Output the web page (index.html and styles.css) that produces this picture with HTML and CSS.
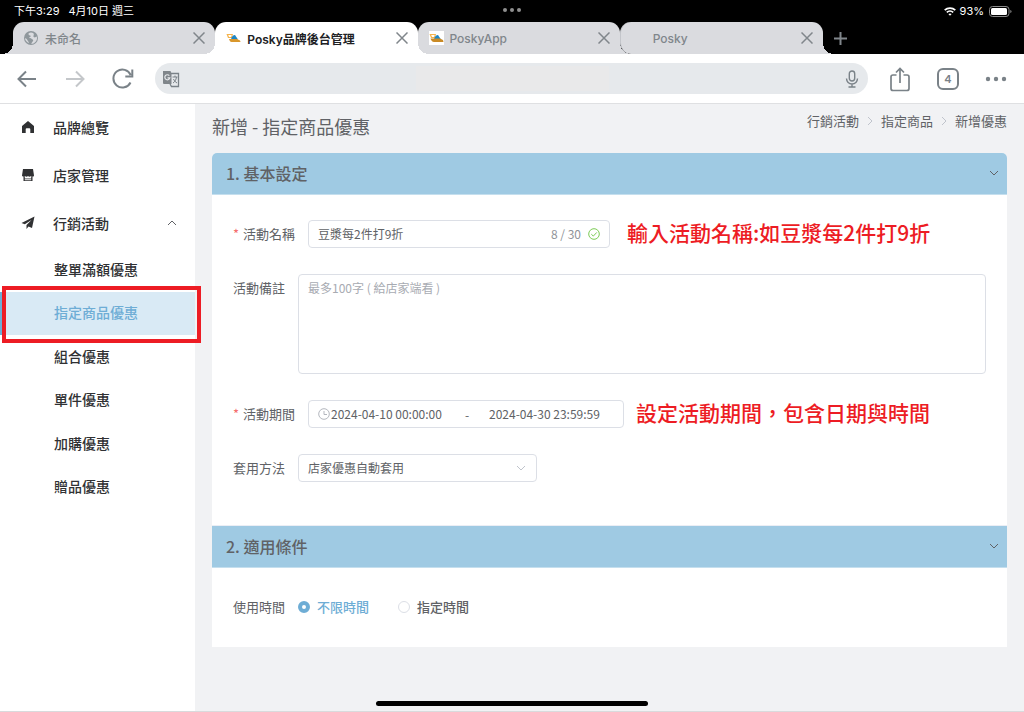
FILE: index.html
```
<!DOCTYPE html>
<html lang="zh-Hant">
<head>
    <meta charset="UTF-8">
    <meta name="viewport" content="width=device-width, initial-scale=1.0">
    <title>Posky品牌後台管理</title>
    <link rel="stylesheet" href="styles.css">
</head>
<body>
    <!-- 狀態列 -->
    <div class="status-bar">
        <span class="status-time">下午3:29</span>
        <span class="status-date">4月10日 週三</span>
        <svg class="status-dots" width="20" height="4" viewBox="0 0 20 4" fill="#8f8f8f"><circle cx="3" cy="2" r="2"/><circle cx="10" cy="2" r="2"/><circle cx="17" cy="2" r="2"/></svg>
        <svg class="wifi" width="12" height="9" viewBox="0 0 12 9" fill="none" stroke="#fff" stroke-width="1.7"><path d="M.7 3.2a7.6 7.6 0 0 1 10.6 0M2.8 5.3a4.6 4.6 0 0 1 6.4 0"/><path d="M6 8.8 4.4 7.1a2.4 2.4 0 0 1 3.2 0z" fill="#fff" stroke="none"/></svg>
        <span class="battery-text">93%</span>
        <svg width="23" height="11" viewBox="0 0 23 11"><rect x=".5" y=".5" width="19.500" height="10" rx="3" fill="none" stroke="#8a8a8a"/><rect x="2" y="2" width="16" height="7" rx="1.500" fill="#fff"/><path d="M21.300 4v3q1.200-.4 1.200-1.500T21.300 4z" fill="#8a8a8a"/></svg>
    </div>

    <!-- 分頁 -->
    <div class="tabs">
        <div class="tab">
            <svg class="tab-icon" width="16" height="16" viewBox="0 0 16 16"><circle cx="8" cy="8" r="7" fill="#8f979c"/><path d="M8 2.500c-2 0-3 1-2.300 2.200.6.900 2 .4 2.200 1.400.1.900-1.500.8-1.700 1.700 0 .6 1.600.3 2.300.9 1 .9 2.300 1.200 1.500 2.300-.7 1-1.500 1.700-1.600 3 3.200-.3 5.600-2.800 5.600-6 0-.6-.1-1-.3-1.500-.8.5-1.500 1.300-2.500.8-.9-.5-.9-1.300-.5-2.100.3-.6.200-1.200-.3-1.900-.7-.500-1.500-.8-2.400-.8zM2 8c1 .5 2 1 2.500 2.200.4 1 1.200 1.200 1.500 2.700-2.300-.7-4-2.600-4-4.900z" fill="#dadbdf"/></svg>
            <span class="tab-title">未命名</span>
            <button class="tab-close" aria-label="關閉分頁"><svg width="12" height="12" viewBox="0 0 12 12"><path d="M.5.5l11 11M11.500.5l-11 11"/></svg></button>
        </div>
        <div class="tab active">
            <svg class="tab-icon" width="16" height="16" viewBox="0 0 16 16"><path d="M1.500 4H8L7 8H3z" fill="#f6b34b"/><path d="M3.200 5h3.500l-.6 2H4z" fill="#fff"/><path d="M6 9.500C6.500 6.500 8 5 10 5l3 4.500z" fill="#1f86c4"/><path d="M4 9h8l3 1.500.5 1.500H6.500C5 12 4.500 10.500 4 9z" fill="#d9972c"/></svg>
            <span class="tab-title">Posky品牌後台管理</span>
            <button class="tab-close" aria-label="關閉分頁"><svg width="12" height="12" viewBox="0 0 12 12"><path d="M.5.5l11 11M11.500.5l-11 11"/></svg></button>
        </div>
        <div class="tab">
            <svg class="tab-icon" width="16" height="16" viewBox="0 0 16 16"><path d="M1 1h15v14H1z" fill="#fff"/><path d="M1.500 4H8L7 8H3z" fill="#f6b34b"/><path d="M3.200 5h3.500l-.6 2H4z" fill="#fff"/><path d="M6 9.500C6.500 6.500 8 5 10 5l3 4.500z" fill="#1f86c4"/><path d="M2.500 8.500H12l3 1.500.5 2H6C4 12 3 10 2.500 8.500z" fill="#c98a25"/></svg>
            <span class="tab-title">PoskyApp</span>
            <button class="tab-close" aria-label="關閉分頁"><svg width="12" height="12" viewBox="0 0 12 12"><path d="M.5.5l11 11M11.500.5l-11 11"/></svg></button>
        </div>
        <div class="tab divided">
            <span class="tab-icon"></span>
            <span class="tab-title">Posky</span>
            <button class="tab-close" aria-label="關閉分頁"><svg width="12" height="12" viewBox="0 0 12 12"><path d="M.5.5l11 11M11.500.5l-11 11"/></svg></button>
        </div>
        <button class="tab-add" aria-label="新增分頁"><svg width="13" height="13" viewBox="0 0 13 13"><path d="M6.500 0v13M0 6.500h13"/></svg></button>
    </div>

    <!-- 工具列 -->
    <div class="toolbar">
        <button aria-label="上一頁"><svg width="22" height="22" viewBox="0 0 22 22"><path d="M20 11H2.500M10 3.500 2.500 11l7.500 7.500"/></svg></button>
        <button class="disabled" aria-label="下一頁"><svg width="22" height="22" viewBox="0 0 22 22"><path d="M2 11h17.500M12 3.500l7.500 7.500-7.500 7.500"/></svg></button>
        <button aria-label="重新整理"><svg width="22" height="22" viewBox="0 0 22 22"><path d="M18.500 14.500A9 9 0 1 1 18.700 7M20.300 1.500v7h-7"/></svg></button>
        <div class="omnibox">
            <button aria-label="翻譯"><svg width="18" height="18" viewBox="0 0 18 18" fill="none"><path d="M1 1h7.500l1 2.500V14H2a1 1 0 0 1-1-1z" fill="#80868b" stroke="none"/><path d="M9 3.500h7.500v13H9.500L8 14" stroke-width="1.300"/><path d="M7.300 5.700A2.500 2.500 0 1 0 7.800 7.800H5.500" stroke="#e6e9ec" stroke-width="1.200"/><path d="M10.500 7h5M13 5.500V7M11 13c2-1.300 3-3 3.500-6M11.500 9c.5 1.500 2 3 3.500 4" stroke-width="1"/></svg></button>
            <input type="text" class="address" aria-label="網址">
            <button aria-label="語音搜尋"><svg width="14" height="18" viewBox="0 0 14 18"><rect x="4.300" y="1" width="5.400" height="10" rx="2.700" stroke-width="1.400"/><path d="M1.500 8.500a5.500 5.500 0 0 0 11 0M7 14v3M3.500 17h7" stroke-width="1.400"/></svg></button>
        </div>
        <button aria-label="分享"><svg width="22" height="26" viewBox="0 0 22 26"><path d="M7.500 9H4a2 2 0 0 0-2 2v11.500a2 2 0 0 0 2 2h14a2 2 0 0 0 2-2V11a2 2 0 0 0-2-2h-3.500M11 17V3M7 6.500l4-4 4 4" stroke-width="1.700"/></svg></button>
        <button class="tab-count">4</button>
        <button aria-label="更多"><svg width="22" height="6" viewBox="0 0 22 6"><g fill="#7a8288" stroke="none"><circle cx="3" cy="3" r="2.200"/><circle cx="11" cy="3" r="2.200"/><circle cx="19" cy="3" r="2.200"/></g></svg></button>
    </div>

    <div class="page">
        <!-- 左側選單 -->
        <nav class="sidebar">
            <a href="#" class="menu-item">
                <svg width="14" height="14" viewBox="0 0 14 14"><path d="M7 1 1 6v7h3.700V9.200a1 1 0 0 1 1-1h2.600a1 1 0 0 1 1 1V13H13V6z"/></svg>
                品牌總覽
            </a>
            <a href="#" class="menu-item">
                <svg width="14" height="14" viewBox="0 0 14 14"><path d="M2 1h10l1 6.500c0 1.500-2.400 1.500-3 .5-.6 1-2.400 1-3 0-.6 1-2.400 1-3 0-.6 1-3 1-3-.5zM2.500 8.500h1.300v2h6.400v-2h1.300V13h-9zM3.800 11.300v.9h6.400v-.9z" fill-rule="evenodd"/></svg>
                店家管理
            </a>
            <a href="#" class="menu-item">
                <svg width="14" height="14" viewBox="0 0 14 14"><path d="M13.500.5.5 7l3.300 1.300L10.500 4 5.500 9v4l2-2.500 3.500 1.500z"/></svg>
                行銷活動
                <svg class="arrow" width="10" height="10" viewBox="0 0 10 10"><path d="M1 7l4-4 4 4"/></svg>
            </a>
            <div class="submenu">
                <a href="#">整單滿額優惠</a>
                <a href="#" class="current">指定商品優惠</a>
                <a href="#">組合優惠</a>
                <a href="#">單件優惠</a>
                <a href="#">加購優惠</a>
                <a href="#">贈品優惠</a>
            </div>
        </nav>

        <main>
            <div class="page-header">
                <h1>新增 - 指定商品優惠</h1>
                <div class="breadcrumb">
                    <a href="#">行銷活動</a>
                    <svg width="8" height="10" viewBox="0 0 8 10"><path d="M2 1l4 4-4 4"/></svg>
                    <a href="#">指定商品</a>
                    <svg width="8" height="10" viewBox="0 0 8 10"><path d="M2 1l4 4-4 4"/></svg>
                    <span>新增優惠</span>
                </div>
            </div>

            <form class="card">
                <button type="button" class="section-title">
                    1. 基本設定
                    <svg width="10" height="10" viewBox="0 0 10 10"><path d="M1 3l4 4 4-4"/></svg>
                </button>
                <div class="section-body basic">
                    <div class="row">
                        <label class="required" for="name">活動名稱</label>
                        <div class="field name-field">
                            <input type="text" id="name" value="豆漿每2件打9折">
                            <span class="count">8 / 30</span>
                            <svg width="12" height="12" viewBox="0 0 12 12" fill="none" stroke="#7ccb56"><circle cx="6" cy="6" r="5.300"/><path d="M3.300 6.200l2 1.900 3.500-3.700"/></svg>
                        </div>
                        <p class="note">輸入活動名稱:如豆漿每2件打9折</p>
                    </div>
                    <div class="row top">
                        <label for="remark">活動備註</label>
                        <textarea id="remark" placeholder="最多100字 ( 給店家端看 )"></textarea>
                    </div>
                    <div class="row">
                        <label class="required" for="start">活動期間</label>
                        <div class="field date-field">
                            <svg width="12" height="12" viewBox="0 0 12 12" fill="none" stroke="#b4b7be"><circle cx="6" cy="6" r="5.300"/><path d="M6 3v3.500h3"/></svg>
                            <input type="text" id="start" value="2024-04-10 00:00:00">
                            <span class="dash">-</span>
                            <input type="text" aria-label="結束時間" value="2024-04-30 23:59:59">
                        </div>
                        <p class="note">設定活動期間，包含日期與時間</p>
                    </div>
                    <div class="row">
                        <label for="method">套用方法</label>
                        <div class="select-wrap">
                            <select id="method">
                                <option>店家優惠自動套用</option>
                            </select>
                            <svg width="10" height="10" viewBox="0 0 10 10"><path d="M1 3l4 4 4-4"/></svg>
                        </div>
                    </div>
                </div>

                <button type="button" class="section-title">
                    2. 適用條件
                    <svg width="10" height="10" viewBox="0 0 10 10"><path d="M1 3l4 4 4-4"/></svg>
                </button>
                <div class="section-body">
                    <div class="row" role="radiogroup" aria-labelledby="time-label">
                        <span class="label" id="time-label">使用時間</span>
                        <label class="radio"><input type="radio" name="time" checked><span>不限時間</span></label>
                        <label class="radio"><input type="radio" name="time"><span>指定時間</span></label>
                    </div>
                </div>
            </form>
        </main>
    </div>
    <div class="home-bar"></div>
</body>
</html>
```
FILE: styles.css
```
*{
    box-sizing: border-box;
}
body{
    margin: 0;
    min-height: 100vh;
    display: flex;
    flex-direction: column;
    position: relative;
    background-color: #f1f2f4;
    border-bottom: 1px solid #d9dadc;
    font-family: "Noto Sans CJK TC", sans-serif;
    font-size: 13px;
    color: #606266;
}
button,input,textarea,select{
    font-family: inherit;
    color: inherit;
    margin: 0;
    padding: 0;
    border: none;
    outline: none;
    background: none;
}
a{
    color: inherit;
    text-decoration: none;
}
svg{
    flex: none;
    display: block;
}

/* 狀態列 */
.status-bar,.tabs,.toolbar{
    font-family: Inter, "Noto Sans CJK TC", sans-serif;
}
.status-bar{
    height: 22px;
    padding: 0 12px 0 14px;
    display: flex;
    align-items: center;
    position: relative;
    background-color: #000;
    color: #fff;
    font-size: 11px;
    line-height: 20px;
}
.status-date{
    margin-left: 9px;
}
.status-dots{
    position: absolute;
    left: calc(50% - 10px);
    top: 8px;
}
.wifi{
    margin-left: auto;
}
.battery-text{
    margin: 0 5px 0 4px;
}

/* 分頁 */
.tabs{
    height: 32px;
    padding-left: 13px;
    display: flex;
    background-color: #000;
}
.tab{
    flex: 1;
    display: flex;
    align-items: center;
    padding: 0 10px;
    position: relative;
    border-radius: 11px 11px 0 0;
    background-color: #dadbdf;
    color: #80868b;
    font-size: 12px;
    font-weight: 500;
}
/* 分頁底部向外的圓角 */
.tab::before,.tab::after{
    content: "";
    position: absolute;
    bottom: 0;
    width: 11px;
    height: 11px;
}
.tab::before{
    left: -11px;
    background: radial-gradient(circle at 0 0, transparent 11px, #dadbdf 11px);
}
.tab::after{
    right: -11px;
    background: radial-gradient(circle at 100% 0, transparent 11px, #dadbdf 11px);
}
.tab.active{
    z-index: 1;
    background-color: #fff;
    color: #202124;
    font-weight: 600;
}
.tab.active::before{
    background: radial-gradient(circle at 0 0, transparent 11px, #fff 11px);
}
.tab.active::after{
    background: radial-gradient(circle at 100% 0, transparent 11px, #fff 11px);
}
.tab.divided{
    border-left: 1px solid #c3c5ca;
    border-radius: 11px 11px 0 11px;
}
.tab.divided::before{
    display: none;
}
.tab-icon{
    width: 16px;
    margin-right: 6px;
}
.tab-title{
    flex: 1;
}
.tab-close svg,.tab-add svg{
    stroke: #80868b;
    stroke-width: 1.5;
}
.tab-add{
    width: 201px;
    padding-left: 11px;
}
.tab-add svg{
    stroke-width: 2;
}

/* 工具列 */
.toolbar{
    height: 50px;
    padding: 0 17px 0 16px;
    display: flex;
    align-items: center;
    gap: 26px;
    background-color: #fff;
    border-bottom: 1px solid #dfe0e2;
}
.toolbar svg{
    fill: none;
    stroke: #7a8288;
    stroke-width: 2;
}
.toolbar .disabled svg{
    stroke: #c4c7ca;
}
.omnibox{
    flex: 1;
    height: 31px;
    margin: 0 -5px;
    padding: 0 9px 0 7px;
    display: flex;
    align-items: center;
    justify-content: space-between;
    border-radius: 16px;
    background-color: #e6e9ec;
}
.address{
    width: 193px;
    height: 25px;
    background-color: #e9e9ea;
}
.tab-count{
    width: 22px;
    height: 22px;
    border: 2px solid #7a8288;
    border-radius: 6px;
    color: #7a8288;
    font-size: 11px;
    font-weight: 600;
}

.page{
    flex: 1;
    display: flex;
}

/* 左側選單 */
.sidebar{
    flex: none;
    width: 195px;
    background-color: #fff;
    color: #303133;
    font-size: 14px;
    font-weight: 500;
}
.menu-item{
    height: 48px;
    padding: 0 18px 2px 21px;
    display: flex;
    align-items: center;
    gap: 18px;
}
.menu-item svg{
    fill: #303133;
}
.menu-item .arrow{
    margin-left: auto;
    fill: none;
    stroke: #606266;
}
.submenu{
    height: 261px;
    display: grid;
    grid-auto-rows: 1fr;
}
.submenu a{
    padding: 0 0 2px 54px;
    display: flex;
    align-items: center;
}
.submenu .current{
    position: relative;
    background-color: #d9eaf5;
    box-shadow: inset 3px 0 #6eadd5;
    color: #6eadd5;
}
/* 紅框標示 */
.submenu .current::after{
    content: "";
    position: absolute;
    top: -6px;
    right: -6px;
    bottom: -8px;
    left: 2px;
    border: 4px solid #ed1c24;
}

/* 內容 */
main{
    flex: 1;
    padding: 0 17px;
}
.page-header{
    height: 49px;
    display: flex;
    justify-content: space-between;
    align-items: center;
}
h1{
    margin: 0 0 6px;
    font-size: 18px;
    line-height: 24px;
    font-weight: 400;
}
.breadcrumb{
    margin-bottom: 16px;
    display: flex;
    align-items: center;
    gap: 7px;
    line-height: 20px;
}
.breadcrumb svg{
    fill: none;
    stroke: #c0c4cc;
}
.card{
    overflow: hidden;
    border-radius: 5px 5px 0 0;
    background-color: #fff;
}
.section-title{
    width: 100%;
    height: 42px;
    padding: 0 8px 2px 14px;
    display: flex;
    align-items: center;
    justify-content: space-between;
    background-color: #9fcae3;
    border-bottom: 1px solid #c5dfee;
    font-size: 16px;
    font-weight: 500;
}
.section-title svg{
    fill: none;
    stroke: #606266;
}
.section-body{
    padding: 25px 21px 26px;
}
.section-body.basic{
    padding-bottom: 43px;
    border-bottom: 1px solid #ebeef5;
}
.row{
    min-height: 28px;
    display: flex;
    align-items: center;
}
.row.top{
    align-items: flex-start;
}
.row + .row{
    margin-top: 26px;
}
.row > label:first-child,.row > .label{
    flex: none;
    width: 65px;
    line-height: 28px;
}
.row > label.required:first-child{
    width: 75px;
}
.required::before{
    content: "*";
    display: inline-block;
    width: 10px;
    color: #f56c6c;
}
.field,textarea,select{
    border: 1px solid #dcdfe6;
    border-radius: 4px;
    background-color: #fff;
    font-size: 12px;
}
.field{
    height: 28px;
    padding: 0 9px;
    display: flex;
    align-items: center;
}
.field input{
    min-width: 0;
    padding-bottom: 1px;
    font-size: 12px;
}
.name-field{
    width: 302px;
}
.name-field input{
    flex: 1;
}
.count{
    margin-right: 7px;
    padding-bottom: 1px;
    color: #909399;
}
.date-field{
    width: 316px;
}
.date-field input{
    width: 114px;
}
.date-field svg{
    margin-right: 1px;
}
.dash{
    width: 44px;
    text-align: center;
}
textarea{
    flex: 1;
    height: 100px;
    padding: 4px 9px;
    line-height: 18px;
    resize: none;
}
textarea::placeholder{
    color: #a8abb2;
}
.select-wrap{
    width: 239px;
    position: relative;
}
select{
    width: 100%;
    height: 28px;
    padding: 0 9px 1px;
    appearance: none;
}
.select-wrap svg{
    position: absolute;
    right: 11px;
    top: 9px;
    fill: none;
    stroke: #c0c4cc;
}
.note{
    margin: 0 0 0 17px;
    padding-bottom: 4px;
    color: #ed1c24;
    font-size: 21px;
    font-weight: 500;
    line-height: 24px;
    white-space: nowrap;
}
.date-field + .note{
    margin-left: 12px;
}
.radio{
    margin-right: 29px;
    display: flex;
    align-items: center;
    gap: 7px;
    font-weight: 500;
    line-height: 26px;
}
.radio input{
    appearance: none;
    width: 12px;
    height: 12px;
    border: 1px solid #dcdfe6;
    border-radius: 50%;
}
.radio input:checked{
    border: 4px solid #6eadd5;
}
.radio input:checked + span{
    color: #6eadd5;
}

.home-bar{
    position: absolute;
    left: calc(50% - 136px);
    bottom: 5px;
    width: 272px;
    height: 5px;
    border-radius: 3px;
    background-color: #000;
}
```
